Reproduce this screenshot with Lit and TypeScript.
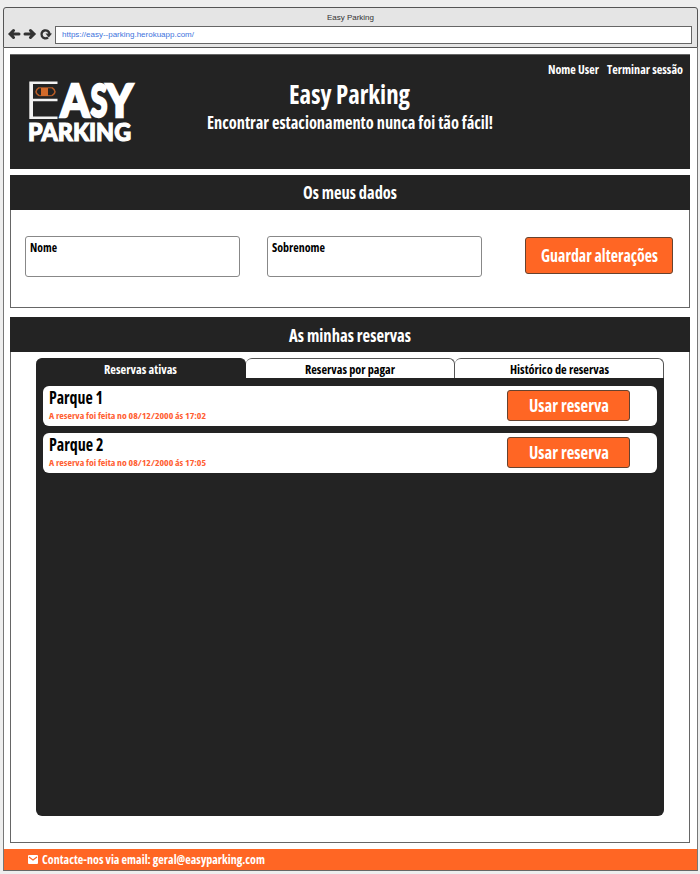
import { LitElement, html, svg, css } from "lit";
import { customElement, property } from "lit/decorators.js";

/* A single line of text set to an exact width; its baseline lies `size` px below its top. */
@customElement("fit-text")
class FitText extends LitElement {
  @property() text = "";
  @property({ type: Number }) w = 100;
  @property({ type: Number }) size = 13;
  @property({ type: Number }) dy = 0;
  static styles = css`
    :host { display: block; flex: none; }
    svg { display: block; overflow: visible; }
    text {
      fill: currentColor;
      font-family: var(--face, "Open Sans", "Noto Sans", sans-serif);
      font-weight: var(--weight, 700);
      font-stretch: 75%;
    }
  `;
  render() {
    return html`<svg width=${this.w} height=${this.size}>
      ${svg`<text x="0" y=${this.size + this.dy} font-size=${this.size} textLength=${this.w} lengthAdjust="spacingAndGlyphs">${this.text}</text>`}
    </svg>`;
  }
}

@customElement("app-root")
class AppRoot extends LitElement {
  static styles = css`
    :host { display: block; height: 874px; background: #eee; overflow: hidden; color: #000; }
    * { box-sizing: border-box; }
    .window { margin-left: 3px; width: 695px; padding-top: 7px; }
    .chrome { height: 41px; background: #e5e5e5; border: 1px solid #555; border-radius: 3px 3px 0 0; padding: 5px 5px 0 4px; --face: "Liberation Sans", Arial, sans-serif; --weight: 400; }
    .caption { display: flex; justify-content: center; height: 13px; color: #333; }
    .nav { display: flex; height: 18px; }
    .nav svg { flex: none; }
    .url { flex: 1; background: #fff; border: 1px solid #666; color: #3d73dd; padding: 2px 0 0 6px; margin-left: 3px; }
    .page { height: 801px; background: #fff; border: solid #777; border-width: 0 1px; padding: 6px 7px 0 6px; }
    .hero { height: 115px; background: #232323; border-top: 1px solid #666; color: #fff; display: grid; grid-template-columns: 196px 287px 1fr; }
    .logo { margin: 24px 0 0 18px; width: 112px; height: 68px; }
    .logo svg { display: block; overflow: visible; }
    .hero-text { display: flex; flex-direction: column; align-items: center; padding-top: 23px; gap: 8px; }
    .links { display: flex; justify-content: flex-end; gap: 8px; padding: 6px 7px 0 0; }
    .section { border: 1px solid #666; border-top: 0; }
    .bar { height: 35px; margin: 0 -1px; background: #232323; color: #fff; display: flex; justify-content: center; padding-top: 7px; }
    .data { margin-top: 6px; height: 133px; }
    .form { display: flex; padding: 26px 15px 0 14px; }
    .field { width: 215px; height: 41px; border: 1px solid #888; border-radius: 3px; padding: 3px 0 0 4px; margin-right: 27px; }
    .button { background: #ff6624; color: #fff; border: 1px solid #66432f; border-radius: 3px; display: flex; justify-content: center; }
    .save { width: 148px; height: 37px; margin: 1px 0 0 16px; padding-top: 6px; }
    .reservations { margin-top: 9px; height: 526px; }
    .tabs { display: grid; grid-template-columns: 210px 209px 209px; height: 20px; margin: 6px 25px 0; }
    .tab { border: 1px solid #555; border-bottom: 0; border-left-width: 0; border-radius: 6px 6px 0 0; display: flex; justify-content: center; padding-top: 2px; }
    .tab.active { background: #232323; color: #fff; border-color: #232323; }
    .panel { margin: 0 25px; height: 438px; background: #232323; border-radius: 0 0 6px 6px; padding: 8px 7px; display: flex; flex-direction: column; gap: 7px; }
    .card { height: 40px; flex: none; background: #fff; border-radius: 6px; display: flex; justify-content: space-between; padding: 0 27px 0 6px; }
    .when { color: #ff6032; margin-top: 6px; }
    .use { width: 123px; height: 31px; margin-top: 4px; padding-top: 4px; }
    .footer { height: 22px; background: #ff6624; border-bottom: 1px solid #666; border-left: 1px solid #777; border-right: 1px solid #777; color: #fff; display: flex; padding: 2px 0 0 24px; gap: 4px; }
    .footer svg { margin-top: 4px; }
  `;

  private t(text: string, w: number, size: number, dy = 0) {
    return html`<fit-text .text=${text} .w=${w} .size=${size} .dy=${dy}></fit-text>`;
  }

  render() {
    const items = [
      { name: "Parque 1", w: 54, at: "17:02" },
      { name: "Parque 2", w: 54.5, at: "17:05" },
    ];
    return html`<div class="window">
      <div class="chrome">
        <div class="caption">${this.t("Easy Parking", 47, 8, -1)}</div>
        <div class="nav">
          <svg width="44" height="18" viewBox="0 0 44 18" fill="none" stroke="#333" stroke-width="3" stroke-linecap="round">
            <path d="M11 8H2.500M5.500 4.500L2 8l3.500 3.500M17 8h8.500M22.500 4.500L26 8l-3.500 3.500" />
            <path d="M40 11.500A4 4 0 1 1 41.500 8" stroke-width="2.400" stroke-linecap="butt" />
            <path d="M37.500 7.500h6.500l-3.200 4z" fill="#333" stroke="none" />
          </svg>
          <div class="url">${this.t("https://easy--parking.herokuapp.com/", 132, 8)}</div>
        </div>
      </div>
      <div class="page">
        <div class="hero">
          <div class="logo">
            <svg width="112" height="68" viewBox="28 79 112 68">
              <path d="M57.500 82.800H30.500V117.700H57.500M30.500 100H57.500" fill="none" stroke="#f2f2f2" stroke-width="2.400" />
              <path d="M31.500 82v36" stroke="#f2f2f2" stroke-width="3" />
              <path d="M39 87.700q-6 4 0 8M52 87.700q6 4 0 8" fill="none" stroke="#b75c26" stroke-width="1.600" />
              <path d="M39 87.800h13M39 95.700h13" stroke="#b75c26" />
              <rect x="41" y="88" width="7" height="8" fill="#d26a2a" />
              <g fill="#fff" stroke="#fff" stroke-width="2.400" font-family="Lato" font-weight="900">
                <text x="60.500" y="117" font-size="46" textLength="29" lengthAdjust="spacingAndGlyphs">A</text>
                <text x="90.500" y="117" font-size="46" textLength="17" lengthAdjust="spacingAndGlyphs">S</text>
                <text x="106" y="117" font-size="46" textLength="27" lengthAdjust="spacingAndGlyphs">Y</text>
                <text x="28" y="140.500" font-size="25" textLength="103" lengthAdjust="spacingAndGlyphs" stroke-width="1.200">PARKING</text>
              </g>
            </svg>
          </div>
          <div class="hero-text">${this.t("Easy Parking", 121, 26)}${this.t("Encontrar estacionamento nunca foi tão fácil!", 286, 17)}</div>
          <div class="links">${this.t("Nome User", 51, 13)}${this.t("Terminar sessão", 76, 13)}</div>
        </div>
        <div class="section data">
          <div class="bar">${this.t("Os meus dados", 94, 17, -0.5)}</div>
          <div class="form">
            <div class="field">${this.t("Nome", 27, 13, -1)}</div>
            <div class="field">${this.t("Sobrenome", 53, 13, -1)}</div>
            <div class="button save">${this.t("Guardar alterações", 117, 17, 0.5)}</div>
          </div>
        </div>
        <div class="section reservations">
          <div class="bar">${this.t("As minhas reservas", 122, 17, 0.5)}</div>
          <div class="tabs">
            <div class="tab active">${this.t("Reservas ativas", 73, 13)}</div>
            <div class="tab">${this.t("Reservas por pagar", 90, 13)}</div>
            <div class="tab">${this.t("Histórico de reservas", 99, 13)}</div>
          </div>
          <div class="panel">
            ${items.map((i) => html`<div class="card">
              <div>
                ${this.t(i.name, i.w, 17, 0.5)}
                <div class="when">${this.t("A reserva foi feita no 08/12/2000 ás " + i.at, 157, 9.5)}</div>
              </div>
              <div class="button use">${this.t("Usar reserva", 80, 17)}</div>
            </div>`)}
          </div>
        </div>
      </div>
      <div class="footer">
        <svg width="10" height="9" viewBox="0 0 10 9"><rect width="10" height="9" rx="1" fill="#fff" /><path d="M1 2l4 3 4-3" fill="none" stroke="#ff6624" stroke-width="1.200" /></svg>
        ${this.t("Contacte-nos via email: geral@easyparking.com", 223, 13)}
      </div>
    </div>`;
  }
}
